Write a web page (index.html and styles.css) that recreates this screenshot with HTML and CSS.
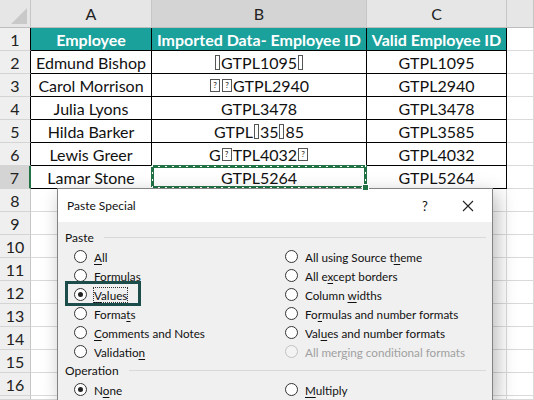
FILE: index.html
```html
<!DOCTYPE html>
<html lang="en">
  <head>
    <meta charset="UTF-8" />
    <meta name="viewport" content="width=device-width, initial-scale=1.0" />
    <title>Paste Special - Values</title>
    <link rel="stylesheet" href="styles.css">
  </head>
  <body>
    <div class="sheet">
      <div class="corner"></div>
      <div class="colhead">A</div>
      <div class="colhead sel">B</div>
      <div class="colhead">C</div>
      <div class="colhead"></div>

      <div class="rownum tb">1</div>
      <div class="cell t hd">Employee</div>
      <div class="cell t hd">Imported Data- Employee ID</div>
      <div class="cell t hd">Valid Employee ID</div>
      <div class="cell"></div>

      <div class="rownum tb">2</div>
      <div class="cell t">Edmund Bishop</div>
      <div class="cell t"><span class="bar"></span>GTPL1095<span class="bar"></span></div>
      <div class="cell t">GTPL1095</div>
      <div class="cell"></div>

      <div class="rownum tb">3</div>
      <div class="cell t">Carol Morrison</div>
      <div class="cell t"><span class="qbox">?</span><span class="qbox">?</span>GTPL2940</div>
      <div class="cell t">GTPL2940</div>
      <div class="cell"></div>

      <div class="rownum tb">4</div>
      <div class="cell t">Julia Lyons</div>
      <div class="cell t">GTPL3478</div>
      <div class="cell t">GTPL3478</div>
      <div class="cell"></div>

      <div class="rownum tb">5</div>
      <div class="cell t">Hilda Barker</div>
      <div class="cell t">GTPL<span class="bar"></span>35<span class="bar"></span>85</div>
      <div class="cell t">GTPL3585</div>
      <div class="cell"></div>

      <div class="rownum tb">6</div>
      <div class="cell t">Lewis Greer</div>
      <div class="cell t">G<span class="qbox">?</span>TPL4032<span class="qbox">?</span></div>
      <div class="cell t">GTPL4032</div>
      <div class="cell"></div>

      <div class="rownum active">7</div>
      <div class="cell t">Lamar Stone</div>
      <div class="cell t copy">GTPL5264<span class="handle"></span></div>
      <div class="cell t">GTPL5264</div>
      <div class="cell"></div>

      <div class="rownum">8</div><div class="cell"></div><div class="cell"></div><div class="cell"></div><div class="cell"></div>
      <div class="rownum">9</div><div class="cell"></div><div class="cell"></div><div class="cell"></div><div class="cell"></div>
      <div class="rownum">10</div><div class="cell"></div><div class="cell"></div><div class="cell"></div><div class="cell"></div>
      <div class="rownum">11</div><div class="cell"></div><div class="cell"></div><div class="cell"></div><div class="cell"></div>
      <div class="rownum">12</div><div class="cell"></div><div class="cell"></div><div class="cell"></div><div class="cell"></div>
      <div class="rownum">13</div><div class="cell"></div><div class="cell"></div><div class="cell"></div><div class="cell"></div>
      <div class="rownum">14</div><div class="cell"></div><div class="cell"></div><div class="cell"></div><div class="cell"></div>
      <div class="rownum">15</div><div class="cell"></div><div class="cell"></div><div class="cell"></div><div class="cell"></div>
      <div class="rownum">16</div><div class="cell"></div><div class="cell"></div><div class="cell"></div><div class="cell"></div>
      <div class="rownum"></div><div class="cell"></div><div class="cell"></div><div class="cell"></div><div class="cell"></div>
    </div>

    <div class="dialog">
      <div class="titlebar">
        <span class="title">Paste Special</span>
        <span class="help">?</span>
        <span class="close">
          <svg width="12" height="12" viewBox="0 0 12 12">
            <path d="M1 1 L11 11 M11 1 L1 11" stroke="#222" stroke-width="1.1" fill="none" />
          </svg>
        </span>
      </div>
      <div class="body">
        <div class="group">Paste</div>
        <div class="options">
          <div class="opt"><span class="radio"></span><span><u>A</u>ll</span></div>
          <div class="opt"><span class="radio"></span><span>Formulas</span></div>
          <div class="opt mark"><span class="radio on"></span><span class="focus"><u>V</u>alues</span></div>
          <div class="opt"><span class="radio"></span><span>Forma<u>t</u>s</span></div>
          <div class="opt"><span class="radio"></span><span><u>C</u>omments and Notes</span></div>
          <div class="opt"><span class="radio"></span><span>Validatio<u>n</u></span></div>
          <div class="opt"><span class="radio"></span><span>All using Source t<u>h</u>eme</span></div>
          <div class="opt"><span class="radio"></span><span>All e<u>x</u>cept borders</span></div>
          <div class="opt"><span class="radio"></span><span>Column <u>w</u>idths</span></div>
          <div class="opt"><span class="radio"></span><span>Fo<u>r</u>mulas and number formats</span></div>
          <div class="opt"><span class="radio"></span><span>Val<u>u</u>es and number formats</span></div>
          <div class="opt off"><span class="radio"></span><span>All mer<u>g</u>ing conditional formats</span></div>
        </div>
        <div class="group">Operation</div>
        <div class="options short">
          <div class="opt"><span class="radio on"></span><span>N<u>o</u>ne</span></div>
          <div class="opt"><span class="radio"></span><span><u>M</u>ultiply</span></div>
        </div>
      </div>
    </div>
  </body>
</html>
```

FILE: styles.css
```css
body {
  margin: 0;
  width: 534px;
  height: 400px;
  overflow: hidden;
  position: relative;
  background-color: #fff;
  font-family: "Lato", sans-serif;
}

.sheet {
  display: grid;
  grid-template-columns: 31px 121px 215px 140px 1fr;
  grid-template-rows: 28px repeat(16, 23px) 4px;
}

.corner {
  position: relative;
  background-color: #e6e6e6;
  border-right: 1px solid #c6c6c6;
  border-bottom: 1px solid #bdbdbd;
}

.corner::after {
  content: "";
  position: absolute;
  right: 3px;
  bottom: 3px;
  border-left: 16px solid transparent;
  border-bottom: 16px solid #c9c9c9;
}

.colhead {
  display: flex;
  align-items: center;
  justify-content: center;
  background-color: #e6e6e6;
  border-right: 1px solid #c6c6c6;
  border-bottom: 1px solid #bdbdbd;
  color: #222;
  font-size: 16px;
}

.colhead.sel {
  background-color: #d4d4d4;
}

.rownum {
  display: flex;
  align-items: center;
  justify-content: center;
  background-color: #efefef;
  border-right: 1px solid #c6c6c6;
  border-bottom: 1px solid #d4d4d4;
  color: #222;
  font-size: 16px;
}

.rownum.tb {
  border-right-color: #000;
}

.rownum.active {
  background-color: #d4d4d4;
  border-right: 2px solid #217346;
}

.cell {
  display: flex;
  align-items: center;
  justify-content: center;
  border-right: 1px solid #dadada;
  border-bottom: 1px solid #dadada;
  color: #111;
  font-size: 16px;
  white-space: nowrap;
}

.cell.t {
  border-color: #000;
}

.cell.hd {
  background-color: #1aa19c;
  color: #fff;
  font-weight: 700;
}

.bar {
  display: inline-block;
  width: 3px;
  height: 13px;
  border: 1px solid #555;
  margin: 0 1px;
}

.qbox {
  display: inline-block;
  width: 8px;
  height: 11px;
  border: 1px solid #555;
  font-size: 8px;
  line-height: 11px;
  text-align: center;
  margin: 0 1px;
}

.copy {
  position: relative;
}

/* marching ants: green frame with short white dashes */
.copy::after {
  content: "";
  position: absolute;
  left: -1px;
  right: -1px;
  top: -1px;
  bottom: -1px;
  background:
    repeating-linear-gradient(90deg, #fff 0 2px, transparent 2px 7px) 0 1px / 100% 1px no-repeat,
    repeating-linear-gradient(90deg, #fff 0 2px, transparent 2px 7px) 0 calc(100% - 1px) / 100% 1px no-repeat,
    repeating-linear-gradient(180deg, #fff 0 2px, transparent 2px 7px) 1px 0 / 1px 100% no-repeat,
    repeating-linear-gradient(180deg, #fff 0 2px, transparent 2px 7px) calc(100% - 1px) 0 / 1px 100% no-repeat,
    linear-gradient(#217346, #217346) 0 0 / 100% 3px no-repeat,
    linear-gradient(#217346, #217346) 0 100% / 100% 3px no-repeat,
    linear-gradient(#217346, #217346) 0 0 / 3px 100% no-repeat,
    linear-gradient(#217346, #217346) 100% 0 / 3px 100% no-repeat;
}

.handle {
  position: absolute;
  right: -3px;
  bottom: -3px;
  width: 5px;
  height: 5px;
  background-color: #217346;
  border: 1px solid #fff;
  z-index: 1;
}

/* dialog on top of the sheet */
.dialog {
  position: absolute;
  left: 57px;
  top: 188px;
  width: 436px;
  height: 212px;
  overflow: hidden;
  box-sizing: border-box;
  border: 1px solid #838383;
  border-bottom: none;
  background-color: #f0f0f0;
  box-shadow: 4px 6px 18px rgba(0, 0, 0, 0.28);
  font-size: 11.7px;
  color: #111;
}

.titlebar {
  display: flex;
  align-items: center;
  height: 33px;
  padding: 0 0 0 9px;
  background-color: #fff;
}

.title {
  flex: 1;
  font-size: 12px;
}

.help {
  width: 20px;
  text-align: center;
  margin-right: 23px;
  font-size: 13px;
}

.close {
  display: flex;
  align-items: center;
  justify-content: center;
  width: 20px;
  margin-right: 14px;
}

.body {
  padding: 6px 6px 0 7px;
}

.group {
  display: flex;
  align-items: center;
  height: 19px;
  font-size: 12px;
}

.group::after {
  content: "";
  flex: 1;
  height: 1px;
  margin-left: 10px;
  background-color: #d9d9d9;
}

.options {
  display: grid;
  grid-template-columns: 211px 1fr;
  grid-template-rows: repeat(6, 19px);
  grid-auto-flow: column;
  padding-left: 9px;
}

.options.short {
  grid-template-rows: 19px;
}

.opt {
  display: flex;
  align-items: center;
  gap: 7px;
  position: relative;
}

.opt u {
  text-underline-offset: 2px;
}

.radio {
  width: 13px;
  height: 13px;
  box-sizing: border-box;
  border: 1px solid #333;
  border-radius: 50%;
  background-color: #fff;
  position: relative;
}

.radio.on::after {
  content: "";
  position: absolute;
  left: 3px;
  top: 3px;
  width: 5px;
  height: 5px;
  border-radius: 50%;
  background-color: #222;
}

.opt.off {
  color: #a0a0a0;
}

.opt.off .radio {
  border-color: #c2c2c2;
  background-color: #f3f3f3;
}

.focus {
  outline: 1px dotted #333;
  outline-offset: 0;
}

.mark::after {
  content: "";
  position: absolute;
  left: -9px;
  top: -4px;
  width: 76px;
  height: 25px;
  box-sizing: border-box;
  border: 3px solid #1d4d4b;
}
```
